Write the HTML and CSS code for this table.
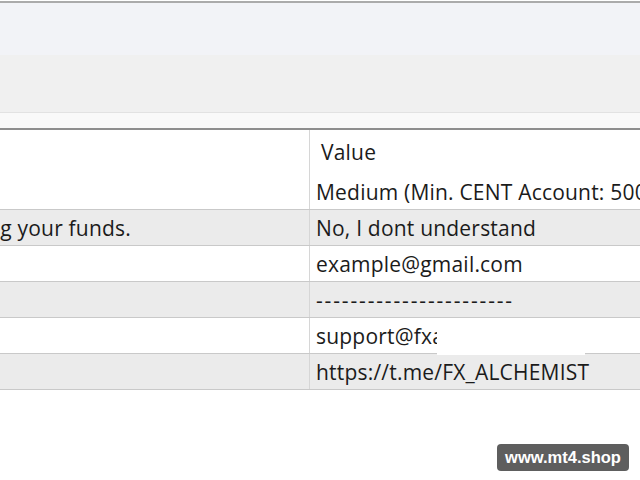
FILE: index.html
```html
<!DOCTYPE html>
<html>
<head>
<meta charset="utf-8">
<link rel="stylesheet" href="styles.css">
</head>
<body>
<div class="window">
  <div class="toolbar">
    <div class="band band-a"></div>
    <div class="band band-b"></div>
    <div class="band band-c"></div>
  </div>
  <div class="grid">
    <div class="row head">
      <div class="cell name"></div>
      <div class="cell value head-value">Value</div>
    </div>
    <div class="row first">
      <div class="cell name"></div>
      <div class="cell value">Medium (Min. CENT Account: 500 USD)</div>
    </div>
    <div class="row alt">
      <div class="cell name">I understand the risk of losing your funds.</div>
      <div class="cell value">No, I dont understand</div>
    </div>
    <div class="row">
      <div class="cell name"></div>
      <div class="cell value">example@gmail.com</div>
    </div>
    <div class="row alt">
      <div class="cell name"></div>
      <div class="cell value dashes">-----------------------</div>
    </div>
    <div class="row">
      <div class="cell name"></div>
      <div class="cell value">support@fxalchemist.com</div>
    </div>
    <div class="row alt">
      <div class="cell name"></div>
      <div class="cell value">https://t.me/FX_ALCHEMIST</div>
    </div>
  </div>
  <div class="redact"></div>
  <div class="watermark">www.mt4.shop</div>
</div>
</body>
</html>
```
FILE: styles.css
```css
html, body {
  margin: 0;
  padding: 0;
  background: #ffffff;
  overflow: hidden;
}
.window {
  position: relative;
  width: 640px;
  height: 480px;
  font-family: "Open Sans", "Noto Sans", sans-serif;
  font-size: 21px;
  letter-spacing: 0.2px;
  color: #1b1b1b;
}
.toolbar {
  margin-top: 1px;
  border-top: 2px solid #ababab;
  border-bottom: 2px solid #8e8e8e;
}
.band-a { height: 52px; background: #f2f3f7; }
.band-b { height: 57px; background: #f0f0f0; border-bottom: 1px solid #e2e2e2; }
.band-c { height: 15px; background: #f9f9f9; }
.grid {
  display: flex;
  flex-direction: column;
}
.row {
  display: grid;
  grid-template-columns: 310px 1fr;
  height: 35px;
  border-bottom: 1px solid #c9c9c9;
  background: #ffffff;
}
.row.head {
  height: 41px;
  border-bottom: none;
}
.row.first {
  height: 38px;
}
.row.alt { background: #ebebeb; }
.cell {
  display: flex;
  align-items: center;
  white-space: nowrap;
  overflow: hidden;
  line-height: 1;
  padding-top: 2px;
}
.name {
  border-right: 1px solid #d6d6d6;
  justify-content: flex-end;
  padding-right: 178px;
}
.value { padding-left: 6px; }
.head-value { padding-left: 11px; padding-top: 3px; }
.first .value { padding-top: 5px; }
.dashes { letter-spacing: 1.85px; }
.redact {
  position: absolute;
  left: 437px;
  top: 317px;
  width: 148px;
  height: 37px;
  background: #ffffff;
}
.watermark {
  position: absolute;
  left: 497px;
  top: 443px;
  width: 132px;
  height: 27px;
  border-radius: 4px;
  background: #5e5e5e;
  color: #ffffff;
  font-family: "Liberation Sans", Arial, sans-serif;
  font-weight: bold;
  font-size: 16.5px;
  letter-spacing: 0;
  display: flex;
  align-items: center;
  justify-content: center;
}
```
